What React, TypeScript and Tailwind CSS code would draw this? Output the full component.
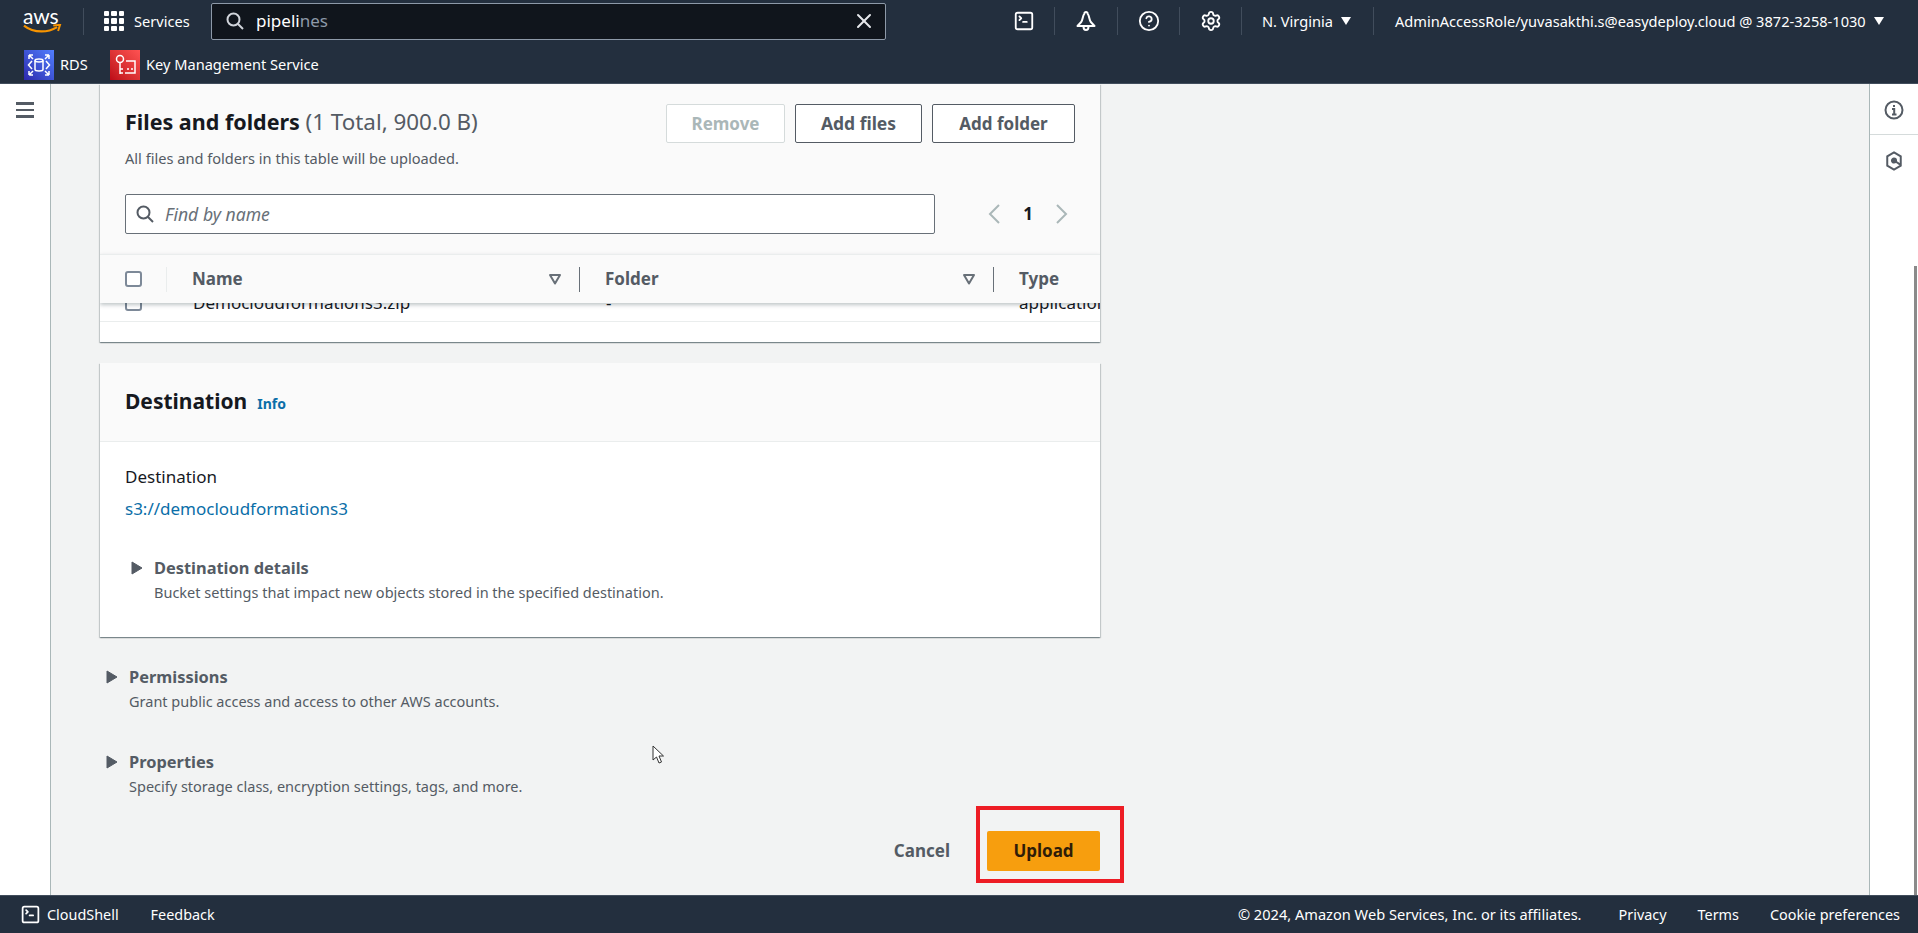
import { Settings, CircleHelp, SquareTerminal, X } from "lucide-react";

function Caret({ className = "" }: { className?: string }) {
  return (
    <svg viewBox="0 0 12 14" className={"w-[12px] h-[14px] " + className}>
      <path d="M1 1l10 6-10 6z" fill="#545b64" stroke="#545b64" strokeLinejoin="round" />
    </svg>
  );
}

function DownTri() {
  return (
    <svg viewBox="0 0 10 8" className="w-[10px] h-[8px] text-white fill-current">
      <path d="M0 0h10L5 8z" />
    </svg>
  );
}

function SortIcon() {
  return (
    <svg viewBox="0 0 14 12" className="w-[14px] h-[12px] shrink-0">
      <path d="M2 2h10L7 10.5z" fill="none" stroke="#687078" strokeWidth="2" strokeLinejoin="round" />
    </svg>
  );
}

function SearchIcon({ color, size }: { color: string; size: number }) {
  return (
    <svg viewBox="0 0 18 18" width={size} height={size} fill="none" stroke={color} strokeWidth="2">
      <circle cx="7.5" cy="7.5" r="6" />
      <path d="M12 12l5 5" />
    </svg>
  );
}

function Checkbox() {
  return <div className="w-[17px] h-[16px] rounded-[3px] border-2 border-[#7d8998] bg-white shrink-0" />;
}

function HeaderCell({ children, className = "" }: { children: React.ReactNode; className?: string }) {
  return (
    <div className={"h-full flex items-center justify-center border-r border-[#414d5c] " + className}>{children}</div>
  );
}

function Collapsed({ title, desc, className = "" }: { title: string; desc: string; className?: string }) {
  return (
    <div className={"flex " + className}>
      <Caret className="mt-[5px] shrink-0" />
      <div className="ml-[11px]">
        <div className="text-[16.4px] leading-[24px] font-bold text-[#545b64]">{title}</div>
        <div className="text-[14.5px] leading-[24px] text-[#545b64]">{desc}</div>
      </div>
    </div>
  );
}

export default function App() {
  return (
    <div className="h-screen w-full flex flex-col overflow-hidden bg-[#f2f3f3] text-[#16191f] font-['Noto_Sans','Liberation_Sans',sans-serif]">
      {/* top navigation */}
      <header className="h-[84px] shrink-0 bg-[#232f3e] border-b border-[#414d5c] text-white">
        <div className="h-[42px] flex items-center pl-[23px]">
          <div className="relative w-[39px] h-[26px] shrink-0">
            <span className="absolute left-0 top-[-4px] text-[21px] leading-[24px] font-['Lato',sans-serif] tracking-[-0.2px]">aws</span>
            <svg viewBox="0 0 40 10" className="absolute left-0 bottom-0 w-[39px] h-[10px]">
              <path d="M1 1.5c5 4 11 6 18 6 5 0 11-1.5 16-4.5" fill="none" stroke="#f79400" strokeWidth="2.2" />
              <path d="M31 1.5l7-.8-2 6.3" fill="none" stroke="#f79400" strokeWidth="2" />
            </svg>
          </div>
          <div className="w-px h-[27px] bg-[#414d5c] ml-[21px]" />
          <div className="ml-[20px] w-[20px] h-[20px] grid grid-cols-3 gap-[2px] shrink-0">
            {Array.from({ length: 9 }).map((_, i) => (
              <div key={i} className="bg-white rounded-[1px]" />
            ))}
          </div>
          <span className="ml-[10px] mt-[1px] w-[56px] text-[14.6px] whitespace-nowrap">Services</span>
          <div className="ml-[21px] w-[675px] h-[37px] bg-[#10151c] border border-[#8d99a8] rounded-[2px] flex items-center pl-[14px] pr-[9px] shrink-0">
            <SearchIcon color="#d1d5db" size={18} />
            <span className="ml-[12px] text-[17px] text-white">pipeli<span className="text-[#8d99a8]">nes</span></span>
            <X className="ml-auto" size={24} strokeWidth={2} color="#e5e7eb" />
          </div>
          <div className="ml-[107px] h-[28px] flex items-center shrink-0">
            <HeaderCell className="w-[62px]">
              <SquareTerminal size={22} strokeWidth={2} />
            </HeaderCell>
            <HeaderCell className="w-[63px]">
              <svg viewBox="0 0 22 22" width="22" height="22" fill="none" stroke="white" strokeWidth="2" strokeLinejoin="round">
                <path d="M11 2c-1 0-1.6.8-1.8 2-1.6 2-1.2 5-3 8L2.5 16h17l-3.700-4c-1.800-3-1.400-6-3-8-.2-1.200-.8-2-1.800-2z" />
                <path d="M8.500 16.500c0 2 1 3.500 2.500 3.500s2.500-1.500 2.500-3.500" />
              </svg>
            </HeaderCell>
            <HeaderCell className="w-[62px]">
              <CircleHelp size={22} strokeWidth={2} />
            </HeaderCell>
            <HeaderCell className="w-[62px]">
              <Settings size={22} strokeWidth={2} />
            </HeaderCell>
            <HeaderCell className="w-[132px] justify-start pl-[20px] gap-[8px] text-[14.6px]">
              <span className="whitespace-nowrap mt-[1px]">N. Virginia</span>
              <DownTri />
            </HeaderCell>
            <div className="pl-[21px] flex items-center gap-[8px] text-[14.6px] whitespace-nowrap">
              <span className="mt-[1px]">AdminAccessRole/yuvasakthi.s@easydeploy.cloud @ 3872-3258-1030</span>
              <DownTri />
            </div>
          </div>
        </div>
        <div className="h-[41px] flex items-center pl-[24px] pt-[5px] text-[14.6px]">
          <div className="w-[30px] h-[30px] bg-gradient-to-tr from-[#2e27ad] to-[#527fff] flex items-center justify-center shrink-0">
            <svg viewBox="0 0 30 30" className="w-[30px] h-[30px]" fill="none" stroke="white" strokeWidth="1.500">
              <ellipse cx="15" cy="10.500" rx="4" ry="1.500" />
              <path d="M11 10.500v9c0 1 2 1.500 4 1.500s4-.5 4-1.500v-9" />
              <path d="M8 11l-3.500 4L8 19M22 11l3.500 4L22 19" />
              <path d="M5 5h4M5 5v4M5 5l4 4M25 5h-4M25 5v4M25 5l-4 4M5 25h4M5 25v-4M5 25l4-4M25 25h-4M25 25v-4M25 25l-4-4" />
            </svg>
          </div>
          <span className="ml-[6px] w-[50px]">RDS</span>
          <div className="w-[30px] h-[30px] bg-gradient-to-tr from-[#bd0816] to-[#ff5252] flex items-center justify-center shrink-0">
            <svg viewBox="0 0 30 30" className="w-[30px] h-[30px]" fill="none" stroke="white" strokeWidth="1.500">
              <circle cx="10" cy="9" r="3.500" />
              <path d="M10 12.500V24M10 19h3M10 23h3" />
              <path d="M16 11h9v12H15" />
              <path d="M17 19h2M21 19h2" />
            </svg>
          </div>
          <span className="ml-[6px] whitespace-nowrap">Key Management Service</span>
        </div>
      </header>

      {/* body */}
      <main className="flex-1 min-h-0 flex overflow-hidden relative">
        <aside className="w-[51px] shrink-0 bg-white border-r border-[#aab7b8] pl-[16px] pt-[18px]">
          <div className="w-[18px] flex flex-col gap-[4px]">
            <div className="h-[2.500px] bg-[#545b64]" />
            <div className="h-[2.500px] bg-[#545b64]" />
            <div className="h-[2.500px] bg-[#545b64]" />
          </div>
        </aside>

        <div className="flex-1 min-w-0 pl-[49px]">
          <div className="w-[1000px]">
            {/* files card */}
            <section className="h-[258px] bg-white overflow-hidden shadow-[0_1px_1px_0_rgba(0,28,36,0.3),1px_1px_1px_0_rgba(0,28,36,0.15),-1px_1px_1px_0_rgba(0,28,36,0.15)] relative">
              <div className="h-[170px] bg-[#fafafa] px-[25px] pt-[20px]">
                <div className="flex items-start justify-between">
                  <div className="mt-[4px]">
                    <h2 className="text-[21.5px] leading-[28px] font-bold whitespace-nowrap">
                      Files and folders <span className="text-[22.4px] font-normal text-[#545b64]">(1 Total, 900.0 B)</span>
                    </h2>
                    <p className="mt-[12px] text-[14.6px] leading-[20px] text-[#545b64]">All files and folders in this table will be uploaded.</p>
                  </div>
                  <div className="flex gap-[10px]">
                    <button className="w-[119px] h-[39px] rounded-[2px] border border-[#d5dbdb] bg-white text-[17px] font-bold text-[#aab7b8]">Remove</button>
                    <button className="w-[127px] h-[39px] rounded-[2px] border border-[#545b64] bg-white text-[17.5px] font-bold text-[#545b64]">Add files</button>
                    <button className="w-[143px] h-[39px] rounded-[2px] border border-[#545b64] bg-white text-[17px] font-bold text-[#545b64]">Add folder</button>
                  </div>
                </div>
                <div className="mt-[26px] flex items-center">
                  <div className="w-[810px] h-[40px] bg-white border border-[#687078] rounded-[2px] flex items-center pl-[10px]">
                    <SearchIcon color="#545b64" size={18} />
                    <span className="ml-[11px] text-[17.6px] italic text-[#687078]">Find by name</span>
                  </div>
                  <div className="ml-[52px] flex items-center">
                    <svg viewBox="0 0 14 20" className="w-[14px] h-[20px]" fill="none" stroke="#aab7b8" strokeWidth="2"><path d="M12 1L3 10l9 9" /></svg>
                    <span className="w-[54px] text-center text-[17px] font-bold">1</span>
                    <svg viewBox="0 0 14 20" className="w-[14px] h-[20px]" fill="none" stroke="#aab7b8" strokeWidth="2"><path d="M2 1l9 9-9 9" /></svg>
                  </div>
                </div>
              </div>
              <div className="relative z-10 h-[49px] bg-[#fafafa] border-t border-[#eaeded] shadow-[0_2px_4px_0_rgba(0,28,36,0.25)] flex items-center pl-[25px] text-[17px] font-bold text-[#545b64]">
                <Checkbox />
                <div className="w-px h-[25px] bg-[#eaeded] ml-[24px] shrink-0" />
                <span className="ml-[25px] w-[356px] shrink-0">Name</span>
                <SortIcon />
                <div className="w-px h-[25px] bg-[#687078] ml-[17px] shrink-0" />
                <span className="ml-[25px] w-[357px] shrink-0">Folder</span>
                <SortIcon />
                <div className="w-px h-[25px] bg-[#687078] ml-[17px] shrink-0" />
                <span className="ml-[25px] shrink-0">Type</span>
              </div>
              <div className="h-[19px] overflow-hidden border-b border-[#eaeded] flex items-start pl-[25px] text-[17px]">
                <div className="-mt-[8px] shrink-0"><Checkbox /></div>
                <span className="-mt-[12px] ml-[51px] w-[413px] shrink-0 leading-[24px]">Democloudformations3.zip</span>
                <span className="-mt-[12px] w-[413px] shrink-0 leading-[24px]">-</span>
                <span className="-mt-[12px] shrink-0 leading-[24px] whitespace-nowrap">application/zip</span>
              </div>
            </section>

            {/* destination card */}
            <section className="mt-[21px] h-[274px] bg-white shadow-[0_1px_1px_0_rgba(0,28,36,0.3),1px_1px_1px_0_rgba(0,28,36,0.15),-1px_1px_1px_0_rgba(0,28,36,0.15)]">
              <div className="h-[79px] bg-[#fafafa] border-b border-[#eaeded] pl-[25px] flex items-center">
                <h2 className="text-[21px] font-bold">Destination</h2>
                <a className="ml-[10px] mt-[3px] text-[14px] font-bold text-[#0a6ea8]">Info</a>
              </div>
              <div className="pl-[25px] pt-[23px]">
                <div className="text-[17px] leading-[24px]">Destination</div>
                <a className="block mt-[8px] text-[17px] leading-[24px] text-[#0a6ea8]">s3://democloudformations3</a>
                <Collapsed className="mt-[35px] ml-[6px]" title="Destination details" desc="Bucket settings that impact new objects stored in the specified destination." />
              </div>
            </section>

            <Collapsed className="mt-[28px] ml-[6px]" title="Permissions" desc="Grant public access and access to other AWS accounts." />
            <Collapsed className="mt-[37px] ml-[6px]" title="Properties" desc="Specify storage class, encryption settings, tags, and more." />

            <div className="mt-[33px] flex items-center justify-end">
              <button className="text-[17px] font-bold text-[#545b64] mr-[37px]">Cancel</button>
              <div className="relative">
                <button className="block w-[113px] h-[40px] rounded-[2px] bg-[#f79e0e] text-[17px] font-bold text-[#2f1d08]">Upload</button>
                <div className="absolute -left-[11px] -right-[24px] -top-[25px] -bottom-[12px] border-4 border-[#ed1c24]" />
              </div>
            </div>
          </div>
        </div>

        <aside className="w-[49px] shrink-0 bg-white border-l border-[#aab7b8] relative">
          <div className="h-[51px] border-b border-[#d5dbdb] flex items-center justify-center pt-[1px]">
            <svg viewBox="0 0 20 20" className="w-[20px] h-[20px]" fill="none" stroke="#545b64" strokeWidth="2">
              <circle cx="10" cy="10" r="8.500" />
              <path d="M8 9h2.200v5M8 14.500h4.500M10 5v2" />
            </svg>
          </div>
          <div className="flex justify-center pt-[16px]">
            <svg viewBox="0 0 20 22" className="w-[18px] h-[20px]" fill="none" stroke="#545b64" strokeWidth="2.200">
              <path d="M10 1.500l7.500 4.300v10.400L10 20.500l-7.500-4.300V5.800z" />
              <circle cx="10" cy="10.500" r="2.300" fill="#545b64" />
              <path d="M11 11l6 4" />
            </svg>
          </div>
          <div className="absolute right-[1px] top-[182px] bottom-[-10px] w-[3px] bg-[#8a8a8a]" />
        </aside>

        {/* mouse pointer over the page */}
        <svg viewBox="0 0 12 20" className="absolute left-[652px] top-[661px] w-[12px] h-[20px]">
          <path d="M1 1v14l3.500-3 2.500 6 2.500-1-2.500-6h4.500z" fill="white" stroke="#333" strokeWidth="1" />
        </svg>
      </main>

      {/* footer */}
      <footer className="h-[38px] shrink-0 bg-[#232f3e] border-t border-[#414d5c] text-white text-[14.4px] flex items-center pl-[20px] pr-[18px]">
        <SquareTerminal size={21} strokeWidth={2} />
        <span className="ml-[6px]">CloudShell</span>
        <span className="ml-[32px]">Feedback</span>
        <span className="ml-auto text-[14.6px]">© 2024, Amazon Web Services, Inc. or its affiliates.</span>
        <span className="ml-[37px]">Privacy</span>
        <span className="ml-[31px]">Terms</span>
        <span className="ml-[31px]">Cookie preferences</span>
      </footer>
    </div>
  );
}
